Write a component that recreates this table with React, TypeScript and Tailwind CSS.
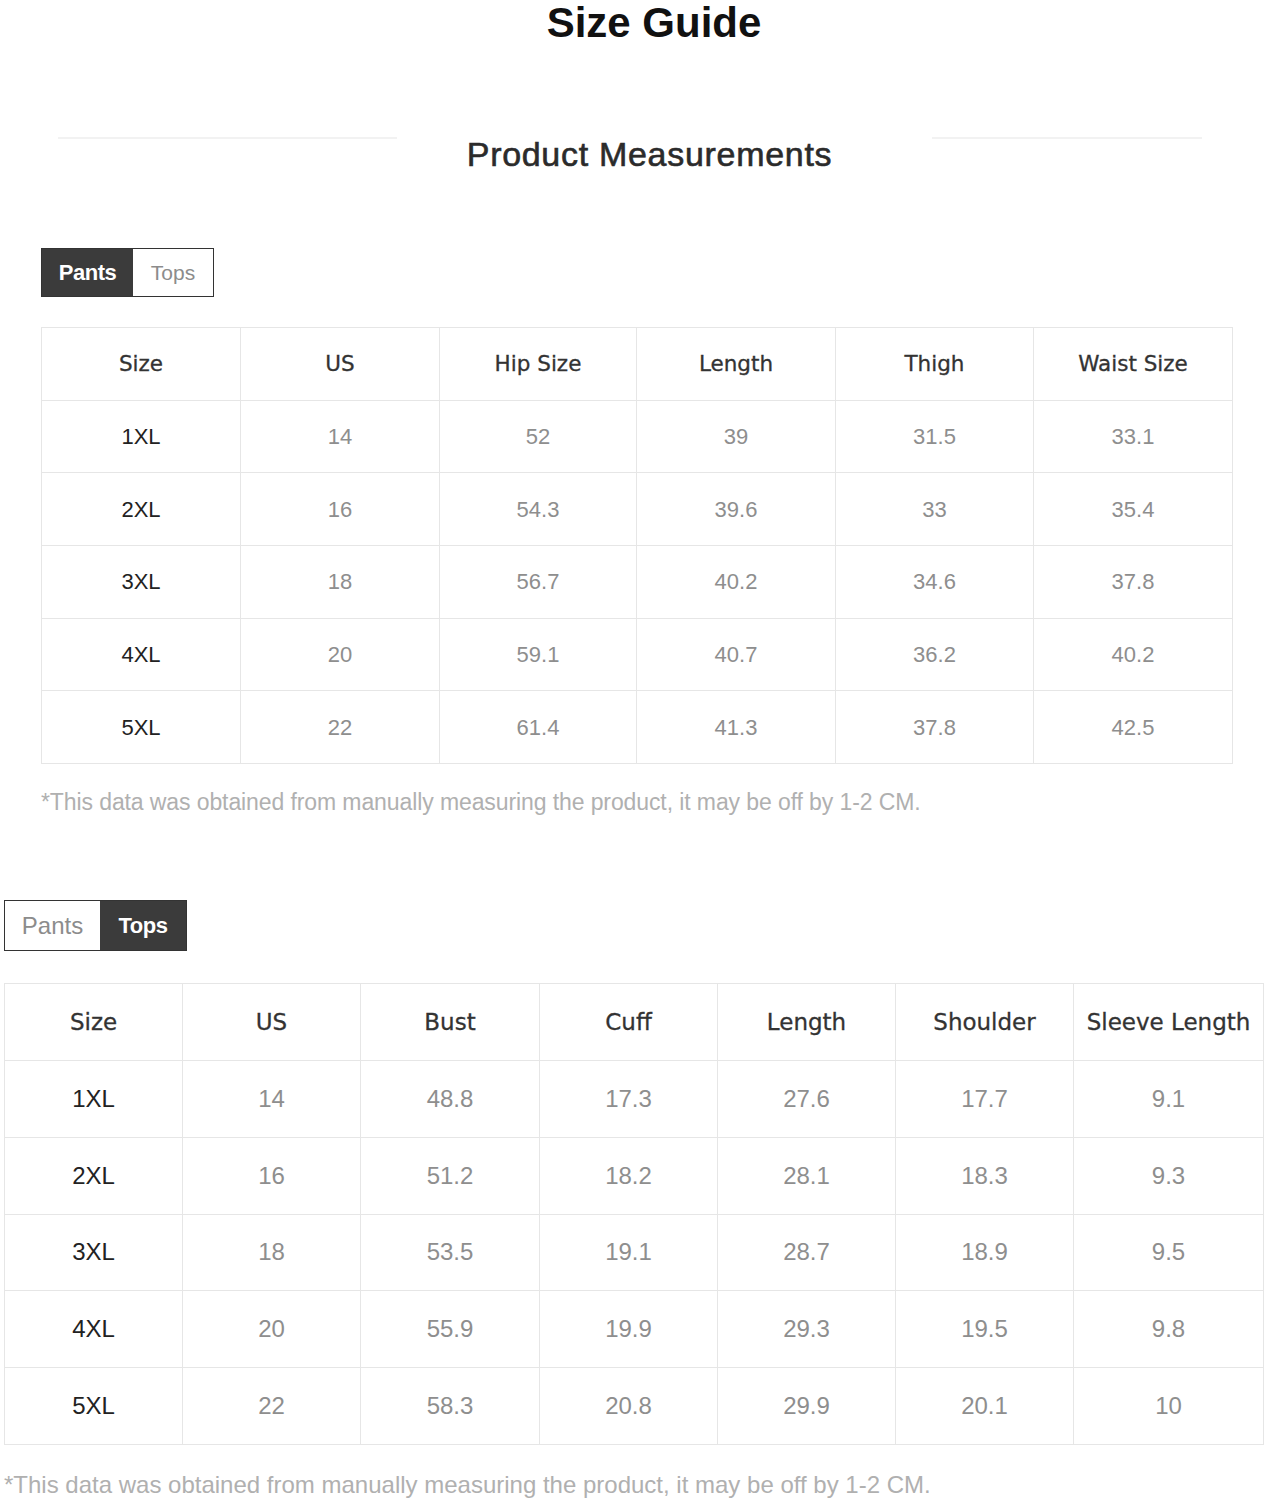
const PANTS_HEAD = ['Size', 'US', 'Hip Size', 'Length', 'Thigh', 'Waist Size']
const PANTS_ROWS = [
  ['1XL', '14', '52', '39', '31.5', '33.1'],
  ['2XL', '16', '54.3', '39.6', '33', '35.4'],
  ['3XL', '18', '56.7', '40.2', '34.6', '37.8'],
  ['4XL', '20', '59.1', '40.7', '36.2', '40.2'],
  ['5XL', '22', '61.4', '41.3', '37.8', '42.5'],
]

const TOPS_HEAD = ['Size', 'US', 'Bust', 'Cuff', 'Length', 'Shoulder', 'Sleeve Length']
const TOPS_ROWS = [
  ['1XL', '14', '48.8', '17.3', '27.6', '17.7', '9.1'],
  ['2XL', '16', '51.2', '18.2', '28.1', '18.3', '9.3'],
  ['3XL', '18', '53.5', '19.1', '28.7', '18.9', '9.5'],
  ['4XL', '20', '55.9', '19.9', '29.3', '19.5', '9.8'],
  ['5XL', '22', '58.3', '20.8', '29.9', '20.1', '10'],
]

const NOTE = '*This data was obtained from manually measuring the product, it may be off by 1-2 CM.'

function Tabs({ active, big }: { active: 'Pants' | 'Tops'; big?: boolean }) {
  const h = big ? 'h-[51px]' : 'h-[49px]'
  return (
    <div className={`inline-flex border border-[#333] ${h} font-['Liberation_Sans',Arial,sans-serif]`}>
      {(['Pants', 'Tops'] as const).map(t => {
        const on = t === active
        const w = big
          ? t === 'Pants' ? 'w-[95px]' : 'w-[86px]'
          : t === 'Pants' ? 'w-[91px]' : 'w-[80px]'
        return (
          <div
            key={t}
            className={`${w} flex items-center justify-center ${
              on
                ? 'bg-[#3b3b3b] text-white font-bold text-[22px] tracking-[-0.5px]'
                : `bg-white text-[#8c8c8c] ${big ? 'text-[24px]' : 'text-[21px]'}`
            }`}
          >
            {t}
          </div>
        )
      })}
    </div>
  )
}

function SizeTable({
  head, rows, rowH, headSize, bodySize, widths,
}: {
  head: string[]; rows: string[][]; rowH: string; headSize: string; bodySize: string; widths: string[]
}) {
  return (
    <table className="w-full table-fixed border-collapse">
      <colgroup>
        {widths.map((w, i) => <col key={i} className={w} />)}
      </colgroup>
      <thead>
        <tr className={rowH}>
          {head.map(h => (
            <th
              key={h}
              className={`border border-[#e6e6e6] font-normal text-[#333] ${headSize} font-['DejaVu_Sans',Verdana,sans-serif] [-webkit-text-stroke:0.3px_#333] whitespace-nowrap p-0`}
            >
              {h}
            </th>
          ))}
        </tr>
      </thead>
      <tbody>
        {rows.map(r => (
          <tr key={r[0]} className={rowH}>
            {r.map((c, i) => (
              <td
                key={i}
                className={`border border-[#e6e6e6] text-center p-0 ${bodySize} font-['Liberation_Sans',Arial,sans-serif] ${
                  i === 0 ? 'text-[#222]' : 'text-[#8e8e8e]'
                }`}
              >
                {c}
              </td>
            ))}
          </tr>
        ))}
      </tbody>
    </table>
  )
}

export default function App() {
  return (
    <div className="w-[1266px] h-[1500px] bg-white overflow-hidden font-['Liberation_Sans',Arial,sans-serif]">
      <h1 className="text-center pl-[42px] text-[42px] leading-[46px] font-bold text-[#111] m-0">
        Size Guide
      </h1>

      <div className="flex items-start mt-[91px] pl-[58px]">
        <div className="w-[339px] h-[2px] bg-[#f2f2f2]" />
        <div className="ml-[64px] w-[377px] text-center text-[34px] leading-none text-[#2b2b2b] tracking-[0.7px] [-webkit-text-stroke:0.6px_#2b2b2b] whitespace-nowrap">
          Product Measurements
        </div>
        <div className="ml-[94px] w-[270px] h-[2px] bg-[#f2f2f2]" />
      </div>

      <div className="pl-[41px] pr-[34px]">
        <div className="mt-[77px]">
          <Tabs active="Pants" />
        </div>
        <div className="mt-[30px]">
          <SizeTable
            head={PANTS_HEAD}
            rows={PANTS_ROWS}
            rowH="h-[72.7px]"
            headSize="text-[21.5px]"
            bodySize="text-[22px]"
            widths={['w-[199px]', 'w-[199px]', 'w-[197px]', 'w-[199px]', 'w-[198px]', 'w-[199px]']}
          />
        </div>
        <p className="mt-[27px] text-[23px] leading-none text-[#b0b0b0] tracking-[-0.1px] whitespace-nowrap">{NOTE}</p>
      </div>

      <div className="pl-[4px] pr-[3px]">
        <div className="mt-[86px]">
          <Tabs active="Tops" big />
        </div>
        <div className="mt-[32px]">
          <SizeTable
            head={TOPS_HEAD}
            rows={TOPS_ROWS}
            rowH="h-[76.8px]"
            headSize="text-[23px]"
            bodySize="text-[24px]"
            widths={['w-[178px]', 'w-[178px]', 'w-[179px]', 'w-[178px]', 'w-[178px]', 'w-[178px]', 'w-[190px]']}
          />
        </div>
        <p className="mt-[28px] text-[24px] leading-none text-[#b0b0b0] whitespace-nowrap">{NOTE}</p>
      </div>
    </div>
  )
}
